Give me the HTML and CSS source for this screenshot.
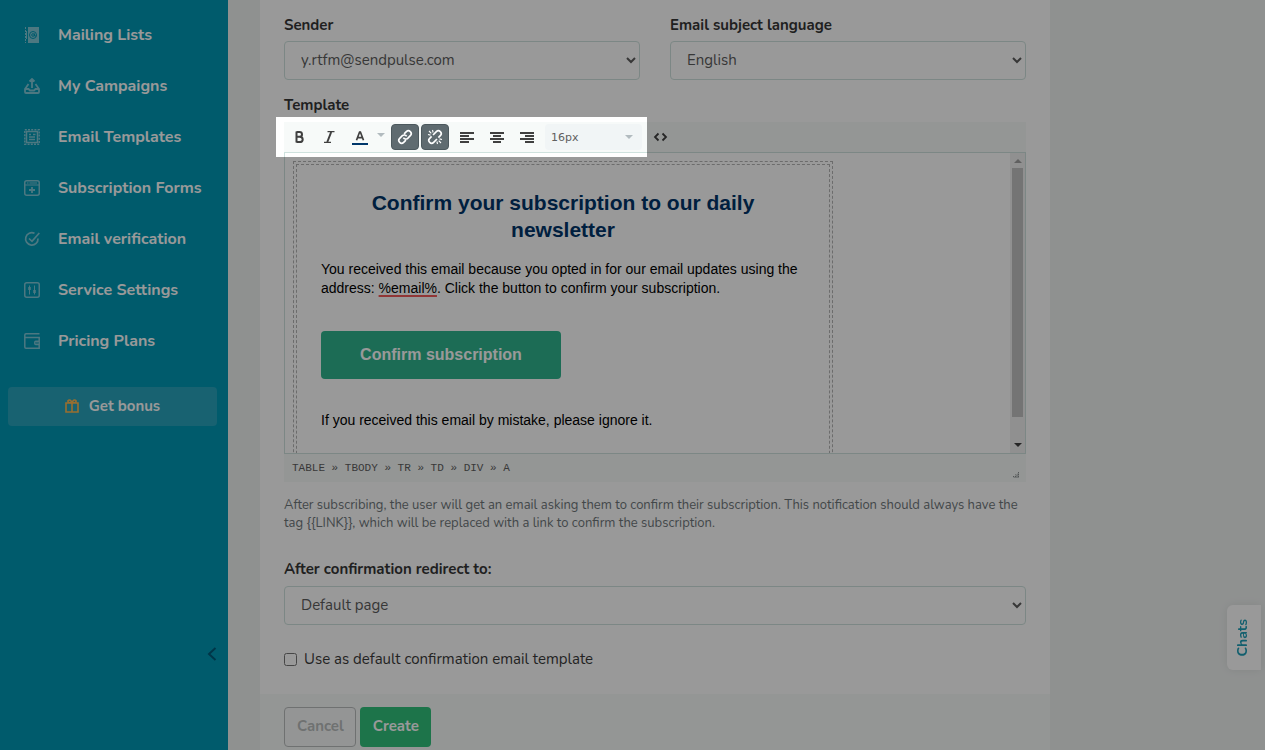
FILE: index.html
```html
<!DOCTYPE html>
<html lang="en">
<head>
<meta charset="utf-8">
<title>Confirmation email</title>
<link rel="stylesheet" href="styles.css">
</head>
<body>
<div class="app">
  <aside class="sidebar">
    <nav class="nav">
      <a class="nav-link" href="#"><svg class="nav-icon" viewBox="0 0 16 16"><path d="M4 0h11v16H4z" fill="currentColor"/><path d="M1.500 0v16" stroke="currentColor" stroke-dasharray="2 1"/><path d="M2.500 4v8" stroke="currentColor"/><circle cx="9" cy="8" r="3.500" fill="none" stroke="#0098b5"/><circle cx="9" cy="8" r="1.300" fill="none" stroke="#0098b5"/><path d="M10.500 6.500v2.500h2" fill="none" stroke="#0098b5"/></svg>Mailing Lists</a>
      <a class="nav-link" href="#"><svg class="nav-icon line" viewBox="0 0 16 16"><path d="M8 10V2M5.500 3.500 8 1l2.500 2.500M4.500 6 1 11v3q0 1 1 1h12q1 0 1-1v-3L11.500 6M1 11h3.500L6 12.500h4l1.500-1.500H15" stroke-width="1.800"/></svg>My Campaigns</a>
      <a class="nav-link" href="#"><svg class="nav-icon line" viewBox="0 0 16 16"><path d="M2.500 2.500h11v11h-11z"/><path d="M.8.800h14.400v14.400H.8z" stroke-dasharray="2 1.200"/><path d="M5 5.500h2M9 5.500h2.500M5 8h6M5 10.500h6"/></svg>Email Templates</a>
      <a class="nav-link" href="#"><svg class="nav-icon line" viewBox="0 0 16 16"><rect x=".75" y=".75" width="14.500" height="14.500" rx="2"/><path d="M1 5h14M3 3h1.500M5.500 3H13" stroke-width="1"/><path d="M8 7v6M5 10h6" stroke-width="1.800"/></svg>Subscription Forms</a>
      <a class="nav-link" href="#"><svg class="nav-icon line" viewBox="0 0 16 16"><path d="M10.500 2.300A6.200 6.200 0 1 0 14 7.500M5 7.500 8 10.300 15.300 2" stroke-width="1.700"/></svg>Email verification</a>
      <a class="nav-link" href="#"><svg class="nav-icon line" viewBox="0 0 16 16"><rect x=".75" y=".75" width="14.500" height="14.500" rx="2"/><path d="M5.500 3.500v9M10.500 3.500v9" stroke-width="1"/><path d="M5.500 5v3M10.500 8v3" stroke-width="2.500"/></svg>Service Settings</a>
      <a class="nav-link" href="#"><svg class="nav-icon line" viewBox="0 0 16 16"><path d="M15.500.8H2Q.8.800.8 2v12q0 1.200 1.200 1.200h13.200V4.500H1M15 8.300h-3.300q-.9 0-.9.900v1.300q0 .9.900.9H15M12.500 9.800h1"/></svg>Pricing Plans</a>
    </nav>
    <button class="bonus" type="button"><svg class="bonus-icon" viewBox="0 0 14 14"><path d="M1 4h12v9H1zM7 4v9M6.500 4C2 4 2.300 1 4.300 1 6 1 6.500 2.500 6.500 4M7.500 4C12 4 11.700 1 9.700 1 8 1 7.500 2.500 7.500 4"/></svg>Get bonus</button>
    <button class="collapse" type="button" aria-label="Collapse menu"><svg viewBox="0 0 10 14" width="10" height="14"><path d="M8.500 1 2 7l6.500 6"/></svg></button>
  </aside>

  <main class="main">
    <form class="card">
      <div class="card-body">
        <div class="row">
          <div class="field">
            <label class="label" for="sender">Sender</label>
            <select class="select" id="sender"><option>y.rtfm@sendpulse.com</option></select>
          </div>
          <div class="field">
            <label class="label" for="language">Email subject language</label>
            <select class="select" id="language"><option>English</option></select>
          </div>
        </div>

        <div class="label">Template</div>
        <div class="editor">
          <div class="toolbar">
            <div class="tools">
              <button class="tool" type="button" aria-label="Bold"><svg viewBox="0 0 16 16" class="glyph"><path d="M5.500 2.500v11M5.500 3h3q2.500 0 2.500 2.400T8.500 7.800h-3M8.500 7.800q3.200 0 3.200 2.600T8.500 13h-3" stroke-width="2"/></svg></button>
              <button class="tool" type="button" aria-label="Italic"><svg viewBox="0 0 16 16" class="glyph"><path d="M6.500 2.700h7M3 13.300h7" stroke-width="1.300"/><path d="M10.200 3 6.300 13" stroke-width="2"/></svg></button>
              <button class="tool tool-color" type="button" aria-label="Text color"><svg viewBox="0 0 16 16" class="glyph"><path d="M4.500 11.200 7.600 3h.8l3.100 8.200M5.600 8.600h4.800" stroke-width="1.700"/><path d="M0 15h16" stroke="#00376b" stroke-width="2"/></svg><span class="caret"></span></button>
              <button class="tool active" type="button" aria-label="Link"><svg viewBox="0 0 16 16" class="glyph"><g transform="rotate(-45 8 8)"><path d="M6.500 10.800H3.300a2.800 2.800 0 0 1 0-5.600H7a2.800 2.800 0 0 1 2.600 3.500M9.500 5.200h3.200a2.800 2.800 0 0 1 0 5.600H9a2.800 2.800 0 0 1-2.600-3.500" stroke-width="1.700"/></g></svg></button>
              <button class="tool active" type="button" aria-label="Unlink"><svg viewBox="0 0 16 16" class="glyph"><g transform="rotate(-45 8 8)"><path d="M8 10.800H3.300a2.800 2.800 0 0 1 0-5.600H6M8 5.200h4.700a2.800 2.800 0 0 1 0 5.600H10" stroke-width="1.700"/></g><path d="M5.500 1l.6 2.500M1 5.500l2.500.6M10.500 15l-.6-2.500M15 10.500l-2.500-.6M2 2l2.300 2.300M11.700 11.700 14 14" stroke-width="1.100"/></svg></button>
              <button class="tool first-align" type="button" aria-label="Align left"><svg viewBox="0 0 16 16" class="glyph"><path d="M1 4h14M1 7h9M1 10h14M1 13h9" stroke-width="2"/></svg></button>
              <button class="tool" type="button" aria-label="Align center"><svg viewBox="0 0 16 16" class="glyph"><path d="M1 4h14M4 7h8M1 10h14M4 13h8" stroke-width="2"/></svg></button>
              <button class="tool" type="button" aria-label="Align right"><svg viewBox="0 0 16 16" class="glyph"><path d="M1 4h14M6 7h9M1 10h14M6 13h9" stroke-width="2"/></svg></button>
              <span class="size"><select class="size-select" aria-label="Font size"><option>16px</option></select><span class="caret"></span></span>
              <span class="spotlight"></span>
            </div>
            <button class="tool" type="button" aria-label="Source"><svg viewBox="0 0 16 16" class="glyph"><path d="M5.500 4.500 2 8l3.500 3.500M9.500 4.500 13 8l-3.500 3.500" stroke-width="1.800"/></svg></button>
          </div>
          <div class="canvas">
            <div class="page">
              <div class="mail">
                <div class="mail-cell">
                  <h1 class="mail-title">Confirm your subscription to our daily newsletter</h1>
                  <p class="mail-text">You received this email because you opted in for our email updates using the address: <span class="misspelt">%email%</span>. Click the button to confirm your subscription.</p>
                  <a class="mail-button" href="#">Confirm subscription</a>
                  <p class="mail-text">If you received this email by mistake, please ignore it.</p>
                </div>
              </div>
            </div>
            <div class="scrollbar">
              <svg viewBox="0 0 15 15" class="scroll-arrow"><path d="M4 10h8L8 6z" fill="#a0a0a0"/></svg>
              <div class="thumb"></div>
              <svg viewBox="0 0 15 15" class="scroll-arrow"><path d="M4 5h8L8 9z" fill="#404040"/></svg>
            </div>
          </div>
          <div class="status">
            <span>TABLE » TBODY » TR » TD » DIV » A</span>
            <svg class="grip" viewBox="0 0 8 8"><path d="M1 8l6-6v6z" fill="#c4c8c8"/><path d="M1.500 7V6M3.500 7V4.500M6.500 7V1" stroke="#8b8f8f" stroke-dasharray="1 1"/></svg>
          </div>
        </div>
        <p class="hint">After subscribing, the user will get an email asking them to confirm their subscription. This notification should always have the tag {{LINK}}, which will be replaced with a link to confirm the subscription.</p>

        <div class="field">
          <label class="label" for="redirect">After confirmation redirect to:</label>
          <select class="select" id="redirect"><option>Default page</option></select>
        </div>
        <div class="check">
          <input class="checkbox" type="checkbox" id="default-template">
          <label for="default-template">Use as default confirmation email template</label>
        </div>
      </div>
      <div class="card-footer">
        <button class="button cancel" type="button">Cancel</button>
        <button class="button create" type="button">Create</button>
      </div>
    </form>
  </main>
</div>
<button class="chats" type="button"><span class="chats-text">Chats</span></button>
</body>
</html>
```

FILE: styles.css
```css
* { box-sizing: border-box; }

body {
  margin: 0;
  background: #eff2f1;
  color: #3b3b3b;
  font: 15px/20px Nunito, Lato, sans-serif;
}

button, select, input { font: inherit; }
button { cursor: pointer; }

.app { display: flex; min-height: 100vh; }

/* Sidebar */
.sidebar {
  display: flex;
  flex-direction: column;
  flex: 0 0 228px;
  padding: 10px 10px 88px 8px;
  background: #0098b5;
}
.nav { display: flex; flex-direction: column; }
.nav-link {
  display: flex;
  align-items: center;
  gap: 18px;
  height: 51px;
  padding: 0 0 1px 16px;
  color: #fff;
  font-size: 16px;
  font-weight: 700;
  text-decoration: none;
}
.nav-icon { width: 16px; height: 16px; color: #80c8d8; }
.line { fill: none; stroke: currentColor; stroke-width: 1.5; }
.bonus {
  display: flex;
  align-items: center;
  justify-content: center;
  gap: 10px;
  height: 39px;
  margin: 20px 1px 0 0;
  padding: 0 6px 2px;
  border: 0;
  border-radius: 4px;
  background: #28a3bc;
  color: #fff;
  font-weight: 700;
}
.bonus-icon { width: 14px; height: 14px; fill: none; stroke: #ffb84f; stroke-width: 1.6; }
.collapse {
  display: flex;
  align-self: flex-end;
  margin-top: auto;
  padding: 1px;
  border: 0;
  background: none;
}
.collapse svg { fill: none; stroke: #005a78; stroke-width: 2; }

/* Form card */
.main { flex: 1; display: flex; padding-left: 32px; }
.card {
  display: flex;
  flex-direction: column;
  flex: 0 1 790px;
  background: #f7faf9;
}
.card-body { padding: 15px 24px 25px; background: #fff; }
.row { display: grid; grid-template-columns: 1fr 1fr; gap: 30px; margin-bottom: 15px; }
.label {
  display: block;
  margin-bottom: 7px;
  color: #363636;
  font-weight: 700;
}
.row .label { margin-bottom: 6px; }
.select {
  display: block;
  width: 100%;
  height: 39px;
  padding: 0 12px 2px;
  border: 1px solid #cfe2de;
  border-radius: 4px;
  background: #fff;
  color: #5c5c5c;
}

/* Editor */
.editor { background: #f7faf9; }
.toolbar { display: flex; align-items: center; height: 30px; }
.tools {
  position: relative;
  display: flex;
  align-items: center;
  gap: 2px;
  height: 30px;
  padding: 0 5px 0 1px;
}
.tool {
  display: flex;
  align-items: center;
  justify-content: center;
  width: 28px;
  height: 26px;
  padding: 0;
  border: 0;
  border-radius: 4px;
  background: none;
  color: #404040;
}
.tool-color { justify-content: flex-start; gap: 9px; width: 44px; padding-left: 7px; }
.tool.active { border: 1px solid #4d595e; background: #5f6b70; color: #fff; }
.first-align { margin-left: 2px; }
.glyph { width: 16px; height: 16px; fill: none; stroke: currentColor; }
.caret {
  border: 4px solid transparent;
  border-top-color: #b2bbbf;
  border-bottom: 0;
}
.tool-color .caret { margin-bottom: 4px; }
.size { position: relative; width: 97px; margin-left: 2px; }
.size-select {
  display: block;
  appearance: none;
  width: 100%;
  height: 26px;
  padding: 1px 6px 0;
  border: 0;
  border-radius: 4px;
  background: #f1f5f6;
  color: #606060;
  font: 11px/16px "DejaVu Sans", sans-serif;
}
.size .caret { position: absolute; top: 11px; right: 9px; }

/* Dims everything outside the highlighted tools */
.spotlight {
  position: absolute;
  z-index: 10;
  inset: -5px 0 -5px -8px;
  border: solid #fff;
  border-width: 5px 0 0 8px;
  box-shadow: 0 0 0 3000px rgba(0, 0, 0, .4);
  pointer-events: none;
}

.canvas {
  display: flex;
  height: 302px;
  border: 1px solid #cfe2de;
  background: #fff;
}
.page { flex: 1; padding: 8px; overflow: hidden; }
.mail { max-width: 540px; padding: 2px; border: 1px dashed #b4b4b4; }
.mail-cell {
  height: 320px;
  padding: 24px;
  border: 1px dashed #b4b4b4;
  color: #000;
  font: 14px/19px "Liberation Sans", Arial, sans-serif;
}
.mail-title {
  margin: 0 0 17px;
  color: #003569;
  font-size: 21px;
  line-height: 27px;
  text-align: center;
}
.mail-text { margin: 0; }
.misspelt {
  text-decoration: underline 2px #f25b5b;
  text-decoration-skip-ink: none;
  text-underline-offset: 2px;
}
.mail-button {
  display: block;
  width: 240px;
  margin: 33px 0 32px;
  border-radius: 4px;
  background: #30b48e;
  color: #fff;
  font-size: 16px;
  font-weight: 700;
  line-height: 48px;
  text-align: center;
  text-decoration: none;
}
.scrollbar { display: flex; flex-direction: column; width: 15px; background: #f1f1f1; }
.scroll-arrow { width: 15px; height: 15px; }
.thumb { flex: 0 0 249px; margin: 0 2px; background: #c1c1c1; }
.scroll-arrow:last-child { margin-top: auto; }
.status {
  display: flex;
  align-items: center;
  justify-content: space-between;
  height: 28px;
  padding: 0 6px 0 8px;
  color: #606060;
  font: 11px/16px "Liberation Mono", monospace;
}
.grip { width: 8px; height: 8px; margin-top: 12px; }

.hint {
  margin: 14px 0 27px;
  color: #6f777b;
  font-size: 13px;
  line-height: 18px;
}
.check { display: flex; align-items: center; gap: 7px; margin-top: 24px; }
.checkbox { width: 13px; height: 13px; margin: 0; }
.card-footer { display: flex; gap: 4px; padding: 13px 24px 3px; }
.button {
  height: 40px;
  padding: 0 11px 2px 12px;
  border: 1px solid transparent;
  border-radius: 4px;
  font-weight: 700;
}
.cancel { border-color: #b9bdbd; background: #f7f9f9; color: #b9bdbd; }
.create { background: #31c17c; color: #fff; }

.chats {
  position: fixed;
  right: 4px;
  bottom: 80px;
  display: flex;
  align-items: center;
  justify-content: center;
  width: 34px;
  height: 65px;
  padding: 0 2px 0 0;
  border: 0;
  border-radius: 6px 0 0 6px;
  background: #fff;
  box-shadow: 0 0 10px rgba(0, 0, 0, .08);
  color: #1f9fb8;
  font-size: 14px;
  font-weight: 700;
}
.chats-text { writing-mode: vertical-rl; transform: rotate(180deg); }
```
